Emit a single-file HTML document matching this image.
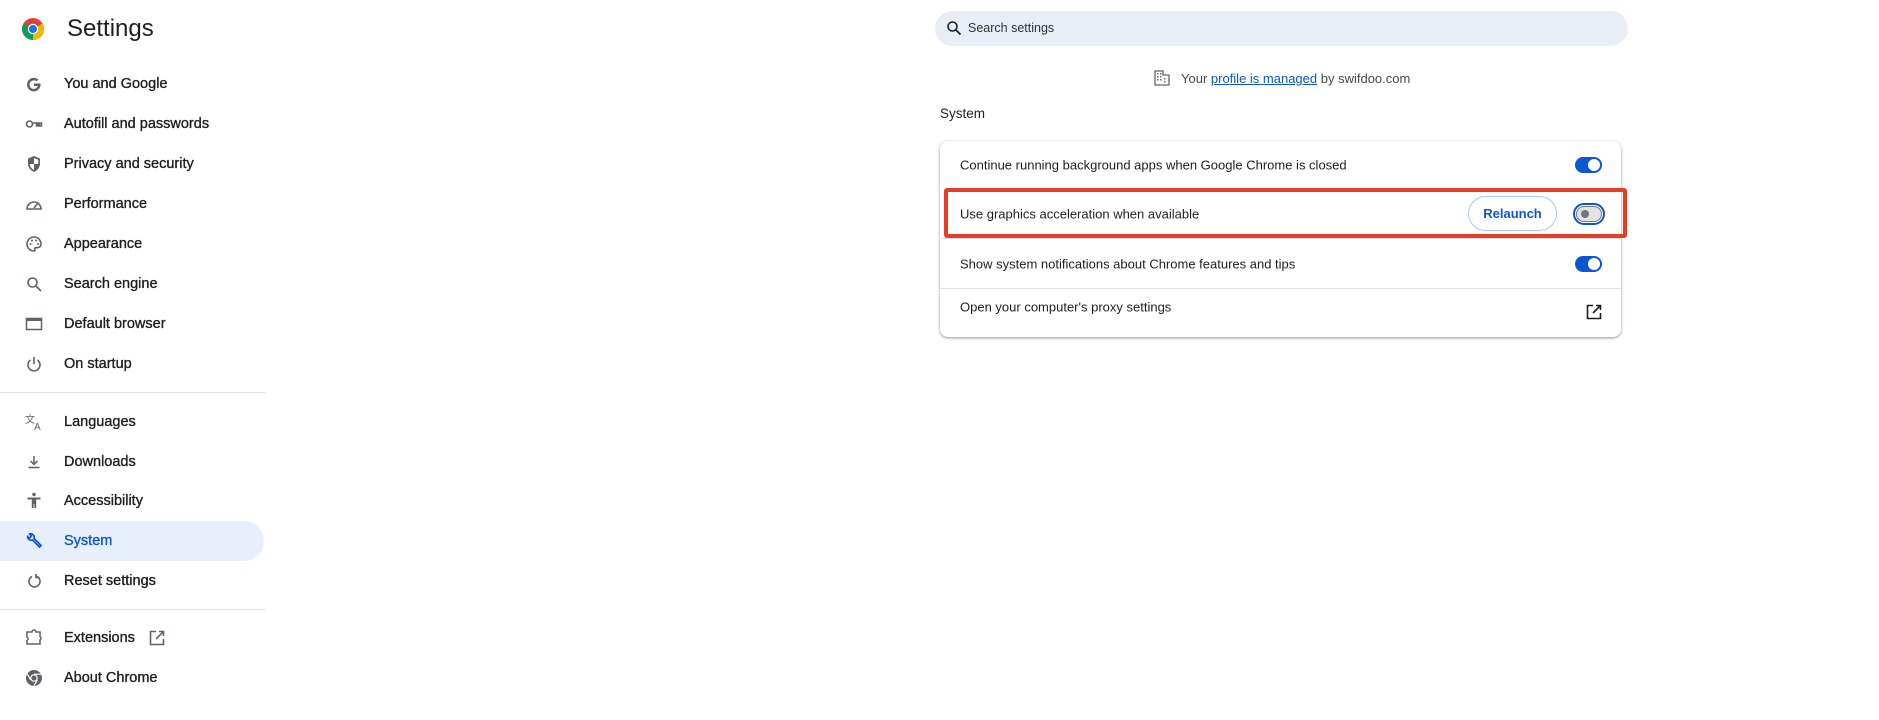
<!DOCTYPE html>
<html><head><meta charset="utf-8"><style>
*{margin:0;padding:0;box-sizing:border-box}
body{width:1879px;height:720px;background:#fff;font-family:"Liberation Sans",sans-serif;color:#1f1f1f;position:relative;overflow:hidden}
.a{position:absolute}
.nav{position:absolute;left:0;height:40px;width:264px;display:flex;align-items:center;font-size:14.5px;font-weight:normal;-webkit-text-stroke:0.35px currentColor;color:#1f1f1f}
.nav .t{position:absolute;left:64px;top:50%;transform:translateY(-50%)}
.nav svg{position:absolute;left:24px;top:10px;width:20px;height:20px}
.sel{background:#e8effb;border-radius:0 20px 20px 0;color:#0b57d0}
.div{position:absolute;left:0;width:266px;height:1px;background:#e3e3e3}
.row{position:absolute;left:960px;font-size:13px;color:#1f1f1f;transform:translateY(-50%)}
.ton{position:absolute;width:27px;height:16px;border-radius:8px;background:#0b57d0}
.ton::after{content:"";position:absolute;right:2px;top:2px;width:12px;height:12px;border-radius:50%;background:#fff}
</style></head><body>
<svg class="a" style="left:21px;top:17px" width="24" height="24" viewBox="0 0 24 24"><circle cx="12" cy="12" r="11" fill="#db4437"/><path d="M12 12 L21.5 6.5 A11 11 0 0 1 12 23 L12 12Z" fill="#f4b400"/><path d="M12 12 L12 23 A11 11 0 0 1 1 12 A11 11 0 0 1 2.5 6.5Z" fill="#0f9d58"/><circle cx="12" cy="12" r="5.2" fill="#fff"/><circle cx="12" cy="12" r="4" fill="#1a73e8"/></svg>
<div class="a" style="left:67px;top:15px;font-size:24px">Settings</div>

<div class="nav" style="top:64px"><svg viewBox="0 0 20 20"><path d="M16.5 9.5H10v2.5h3.8a4.3 4.3 0 1 1-1.2-4.6l1.8-1.8A6.8 6.8 0 1 0 16.6 11z" fill="#5f6368"/></svg><span class="t">You and Google</span></div>
<div class="nav" style="top:104px"><svg viewBox="0 0 20 20"><circle cx="5.5" cy="10" r="3" fill="none" stroke="#5f6368" stroke-width="1.6"/><path d="M8.5 9h9v3h-2v-1.5h-1.5V12h-1.5V9" fill="none" stroke="#5f6368" stroke-width="1.5"/></svg><span class="t">Autofill and passwords</span></div>
<div class="nav" style="top:144px"><svg viewBox="0 0 20 20"><path d="M10 2l6 2.5v5c0 4-2.7 7-6 8.5-3.3-1.5-6-4.5-6-8.5v-5z" fill="#5f6368"/><path d="M10 4l4.3 1.8V10H10zM10 10v6c-2-1-4-3-4.3-6z" fill="#fff"/></svg><span class="t">Privacy and security</span></div>
<div class="nav" style="top:184px"><svg viewBox="0 0 20 20"><path d="M3 15a7 7 0 1 1 14 0z" fill="none" stroke="#5f6368" stroke-width="1.6"/><path d="M10 14l4-5" stroke="#5f6368" stroke-width="1.6"/></svg><span class="t">Performance</span></div>
<div class="nav" style="top:224px"><svg viewBox="0 0 20 20"><path d="M10 3a7 7 0 0 0 0 14c1 0 1.3-.8.8-1.5-.6-.8 0-1.8 1-1.8h1.7A3.5 3.5 0 0 0 17 10c0-3.9-3.1-7-7-7z" fill="none" stroke="#5f6368" stroke-width="1.6"/><circle cx="6.5" cy="10" r="1" fill="#5f6368"/><circle cx="8" cy="6.5" r="1" fill="#5f6368"/><circle cx="12" cy="6.5" r="1" fill="#5f6368"/><circle cx="14" cy="10" r="1" fill="#5f6368"/></svg><span class="t">Appearance</span></div>
<div class="nav" style="top:264px"><svg viewBox="0 0 20 20"><circle cx="8.5" cy="8.5" r="4.5" fill="none" stroke="#5f6368" stroke-width="1.6"/><path d="M12 12l5 5" stroke="#5f6368" stroke-width="1.8"/></svg><span class="t">Search engine</span></div>
<div class="nav" style="top:304px"><svg viewBox="0 0 20 20"><rect x="2.5" y="4.5" width="15" height="11" fill="none" stroke="#5f6368" stroke-width="1.5"/><rect x="2.5" y="4.5" width="15" height="2.5" fill="#5f6368"/></svg><span class="t">Default browser</span></div>
<div class="nav" style="top:344px"><svg viewBox="0 0 20 20"><path d="M6.5 6a6 6 0 1 0 7 0" fill="none" stroke="#5f6368" stroke-width="1.6"/><path d="M10 3v7" stroke="#5f6368" stroke-width="1.6"/></svg><span class="t">On startup</span></div>
<div class="div" style="top:392px"></div>
<div class="nav" style="top:402px"><svg viewBox="0 0 20 20"><text x="1" y="11" font-size="10" fill="#5f6368" font-family="Noto Sans CJK SC,sans-serif" stroke="none">文</text><text x="10" y="18" font-size="10" fill="#5f6368">A</text></svg><span class="t">Languages</span></div>
<div class="nav" style="top:442px"><svg viewBox="0 0 20 20"><path d="M10 4v8M6.5 9l3.5 3.5L13.5 9M4.5 15.5h11" fill="none" stroke="#5f6368" stroke-width="1.5"/></svg><span class="t">Downloads</span></div>
<div class="nav" style="top:481px"><svg viewBox="0 0 20 20"><circle cx="10" cy="3.5" r="1.7" fill="#5f6368"/><path d="M3.5 6.5h13v2h-4.3V17h-1.8v-4h-0.8v4H7.8V8.5H3.5z" fill="#5f6368"/></svg><span class="t">Accessibility</span></div>
<div class="nav sel" style="top:521px"><svg viewBox="0 0 20 20"><path d="M4 4.5a3.5 3.5 0 0 0 4.5 4.5l7 7 1.5-1.5-7-7A3.5 3.5 0 0 0 5.5 3L7.5 5 5 7.5 3 5.5" fill="none" stroke="#0b57d0" stroke-width="1.7"/></svg><span class="t">System</span></div>
<div class="nav" style="top:561px"><svg viewBox="0 0 20 20"><path d="M8 5.5a5.5 5.5 0 1 0 5 0" fill="none" stroke="#5f6368" stroke-width="1.6"/><path d="M12 3v3.5h3.5" fill="none" stroke="#5f6368" stroke-width="1.6"/></svg><span class="t">Reset settings</span></div>
<div class="div" style="top:609px"></div>
<div class="nav" style="top:618px"><svg viewBox="0 0 20 20"><path d="M3 4h5a2 2 0 0 1 4 0h4v4.5a2 2 0 0 1 0 3.5V16H3v-3.5a2 2 0 0 0 0-3.5z" fill="none" stroke="#5f6368" stroke-width="1.5"/></svg><span class="t">Extensions</span><svg viewBox="0 0 20 20" style="left:147px"><path d="M9 3.5H3.5v13h13V11M12 3.5h4.5V8M16.5 3.5 9 11" fill="none" stroke="#5f6368" stroke-width="1.6"/></svg></div>
<div class="nav" style="top:658px"><svg viewBox="0 0 20 20"><circle cx="10" cy="10" r="8" fill="#5f6368"/><circle cx="10" cy="10" r="3.8" fill="#fff"/><circle cx="10" cy="10" r="2.6" fill="#5f6368"/><path d="M10 6.2h7M6.7 11.9 3.2 5.8M13.3 11.9 9.8 18" stroke="#fff" stroke-width="1.2"/></svg><span class="t">About Chrome</span></div>

<div class="a" style="left:935px;top:11px;width:693px;height:35px;border-radius:18px;background:#e9eef6"></div>
<svg class="a" style="left:946px;top:20px" width="16" height="16" viewBox="0 0 16 16"><circle cx="6.5" cy="6.5" r="4.5" fill="none" stroke="#1f1f1f" stroke-width="1.6"/><path d="M10 10l4.5 4.5" stroke="#1f1f1f" stroke-width="1.7"/></svg>
<div class="a" style="left:968px;top:21px;font-size:12.5px;color:#333">Search settings</div>

<svg class="a" style="left:1154px;top:70px" width="16" height="16" viewBox="0 0 16 16"><path d="M1 15V1h8v4h6v10z" fill="none" stroke="#5f6368" stroke-width="1.3"/><path d="M3 3h1.5v1.5H3zM6 3h1.5v1.5H6zM3 6h1.5v1.5H3zM6 6h1.5v1.5H6zM3 9h1.5v1.5H3zM6 9h1.5v1.5H6zM10 8h1.5v1.5H10zM10 11h1.5v1.5H10z" fill="#5f6368"/></svg>
<div class="a" style="left:1181px;top:71px;font-size:13px;color:#474747">Your <span style="color:#0b57d0;text-decoration:underline">profile is managed</span> by swifdoo.com</div>
<div class="a" style="left:940px;top:106px;font-size:13.5px;color:#1f1f1f">System</div>

<div class="a" style="left:940px;top:141px;width:681px;height:196px;border-radius:8px;background:#fff;box-shadow:0 1px 3px rgba(0,0,0,.3),0 1px 2px rgba(0,0,0,.15)"></div>
<div class="row" style="top:165px">Continue running background apps when Google Chrome is closed</div>
<div class="ton" style="left:1575px;top:157px"></div>
<div class="a" style="left:940px;top:238px;width:681px;height:1px;background:#e3e3e3"></div>
<div class="row" style="top:214px">Use graphics acceleration when available</div>
<div class="a" style="left:1468px;top:196px;width:89px;height:35px;border:1px solid #a8c7fa;border-radius:18px;color:#0b57d0;font-size:13px;font-weight:bold;text-align:center;line-height:33px">Relaunch</div>
<div class="a" style="left:1573px;top:203px;width:32px;height:22px;border:2px solid #0b57d0;border-radius:11px"></div>
<div class="a" style="left:1576px;top:206px;width:26px;height:16px;border:1.5px solid #747775;border-radius:8px;background:#e3e3e3"></div>
<div class="a" style="left:1581px;top:210px;width:8px;height:8px;border-radius:50%;background:#747775"></div>
<div class="a" style="left:944px;top:188px;width:683px;height:50px;border:4px solid #e63d26;border-radius:3px"></div>
<div class="row" style="top:264px">Show system notifications about Chrome features and tips</div>
<div class="ton" style="left:1575px;top:256px"></div>
<div class="a" style="left:940px;top:288px;width:681px;height:1px;background:#e3e3e3"></div>
<div class="row" style="top:307px">Open your computer's proxy settings</div>
<svg class="a" style="left:1585px;top:303px" width="18" height="18" viewBox="0 0 18 18"><path d="M8 2.5H2.5v13h13V10M11 2.5h4.5V7M15.5 2.5 8 10" fill="none" stroke="#1f1f1f" stroke-width="1.6"/></svg>
</body></html>
